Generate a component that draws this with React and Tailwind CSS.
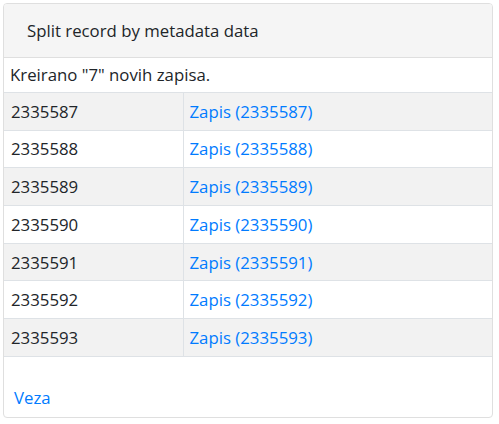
const rows = [2335587, 2335588, 2335589, 2335590, 2335591, 2335592, 2335593];

export default function App() {
  return (
    <div className="w-[499px] h-[424px] bg-white pl-[3px] pt-[3px] font-['Open_Sans',sans-serif] text-[16.8px] text-[#212529]">
      <div className="w-[490px] h-[415px] flex flex-col border border-[#dfdfdf] rounded-[4px] overflow-hidden">
        {/* naslov */}
        <div className="h-[54px] shrink-0 flex items-center pl-[23px] bg-[#f5f5f5] border-b border-[#dfdfdf]">
          Split record by metadata data
        </div>

        <div className="h-[34px] shrink-0 flex items-center pl-[6px]">Kreirano "7" novih zapisa.</div>

        <table className="w-full border-collapse">
          <tbody>
            {rows.map((id, i) => (
              <tr key={id} className={i % 2 === 0 ? "bg-[#f2f2f2]" : "bg-white"}>
                <td className="w-[179px] h-[37.7px] pl-[7px] py-0 border-t border-r border-[#dee2e6]">{id}</td>
                <td className="h-[37.7px] pl-[6px] py-0 border-t border-[#dee2e6] text-[#007bff]">
                  Zapis ({id})
                </td>
              </tr>
            ))}
            <tr>
              <td colSpan={2} className="h-0 border-t border-[#dee2e6]"></td>
            </tr>
          </tbody>
        </table>

        <div className="pl-[10px] pt-[28px] text-[#007bff]">Veza</div>
      </div>
    </div>
  );
}
